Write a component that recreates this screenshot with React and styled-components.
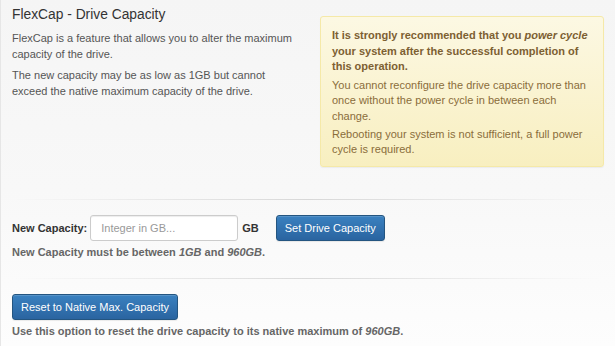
import styled, { createGlobalStyle } from 'styled-components';

const GlobalStyle = createGlobalStyle`
  html, body {
    margin: 0;
    padding: 0;
  }
  body {
    font-family: "Liberation Sans", Arial, sans-serif;
    font-size: 11px;
    color: #555;
    background: #fff;
  }
`;

const App = () => {
  return (
    <>
      <GlobalStyle />
      <Page>
        <TopSection>
          <Intro>
            <Title>FlexCap - Drive Capacity</Title>
            <Para>FlexCap is a feature that allows you to alter the maximum capacity of the drive.</Para>
            <Para>
              The new capacity may be as low as 1GB but cannot<br />
              exceed the native maximum capacity of the drive.
            </Para>
          </Intro>
          <Warning>
            <WarnStrong>
              It is strongly recommended that you <em>power cycle</em> your system after the successful completion of this operation.
            </WarnStrong>
            <WarnText>You cannot reconfigure the drive capacity more than once without the power cycle in between each change.</WarnText>
            <WarnText>Rebooting your system is not sufficient, a full power cycle is required.</WarnText>
          </Warning>
        </TopSection>

        <Divider />

        <FormRow>
          <Label htmlFor="cap">New Capacity:</Label>
          <Input id="cap" placeholder="Integer in GB..." />
          <Unit>GB</Unit>
          <Button>Set Drive Capacity</Button>
        </FormRow>
        <Help>
          New Capacity must be between <em>1GB</em> and <em>960GB</em>.
        </Help>

        <Divider />

        <ResetBlock>
          <Button>Reset to Native Max. Capacity</Button>
          <Help>
            Use this option to reset the drive capacity to its native maximum of <em>960GB</em>.
          </Help>
        </ResetBlock>
      </Page>
    </>
  );
};

const Page = styled.div`
  width: 615px;
  height: 346px;
  box-sizing: border-box;
  overflow: hidden;
  border-left: 1px solid #e6e6e6;
  background: linear-gradient(to bottom, #f5f5f5 0%, #f8f8f8 55%, #fdfdfd 100%);
`;

const TopSection = styled.div`
  display: flex;
  justify-content: space-between;
  align-items: flex-start;
  padding: 6px 11px 0 11px;
  height: 199px;
  box-sizing: border-box;
`;

const Intro = styled.div`
  width: 292px;
`;

const Title = styled.h3`
  margin: 0 0 6px;
  font-size: 13.8px;
  font-weight: normal;
  color: #333;
  line-height: 18px;
`;

const Para = styled.p`
  margin: 0 0 5px;
  font-size: 11px;
  line-height: 16px;
  color: #555;
`;

const Warning = styled.div`
  width: 284px;
  margin-top: 10px;
  box-sizing: border-box;
  padding: 11px 11px 8px;
  border: 1px solid #f5e9a8;
  border-radius: 3px;
  background: linear-gradient(to bottom, #fcf8e3 0%, #f8efc0 100%);
  box-shadow: 0 1px 1px rgba(0, 0, 0, 0.05);
  color: #8a6d3b;
`;

const WarnStrong = styled.p`
  margin: 0 0 3px;
  font-weight: bold;
  font-size: 11px;
  line-height: 15.5px;
  color: #7d6032;
`;

const WarnText = styled.p`
  margin: 0 0 2.5px;
  font-size: 11px;
  line-height: 15.5px;

  &:last-child {
    margin-bottom: 0;
  }
`;

const Divider = styled.hr`
  margin: 0 10px;
  border: 0;
  height: 1px;
  background: linear-gradient(to right, rgba(0, 0, 0, 0), rgba(0, 0, 0, 0.13), rgba(0, 0, 0, 0));
`;

const FormRow = styled.div`
  display: flex;
  align-items: center;
  padding: 15px 0 0 11px;
`;

const Label = styled.label`
  font-weight: bold;
  color: #333;
  margin-right: 3px;
`;

const Input = styled.input`
  width: 148px;
  height: 26px;
  box-sizing: border-box;
  padding: 0 10px;
  border: 1px solid #ccc;
  border-radius: 3px;
  background: #fff;
  font-family: inherit;
  font-size: 11px;
  color: #555;
  box-shadow: inset 0 1px 1px rgba(0, 0, 0, 0.075);

  &::placeholder {
    color: #999;
  }
`;

const Unit = styled.span`
  font-weight: bold;
  color: #333;
  margin: 0 17px 0 4px;
`;

const Button = styled.button`
  height: 26px;
  padding: 0 8px;
  border: 1px solid #245580;
  border-radius: 3px;
  background: linear-gradient(to bottom, #3a81c0 0%, #2a64a0 100%);
  color: #fff;
  font-family: inherit;
  font-size: 11px;
  box-shadow: inset 0 1px 0 rgba(255, 255, 255, 0.15), 0 1px 1px rgba(0, 0, 0, 0.075);
  cursor: pointer;
`;

const Help = styled.p`
  margin: 4px 0 0 11px;
  font-size: 11px;
  font-weight: bold;
  color: #666;
  line-height: 14px;
  padding-bottom: 19px;

  em {
    font-style: italic;
  }
`;

const ResetBlock = styled.div`
  padding: 15px 0 0 11px;

  ${Help} {
    margin-left: 0;
    margin-top: 4px;
  }
`;

export default App;
